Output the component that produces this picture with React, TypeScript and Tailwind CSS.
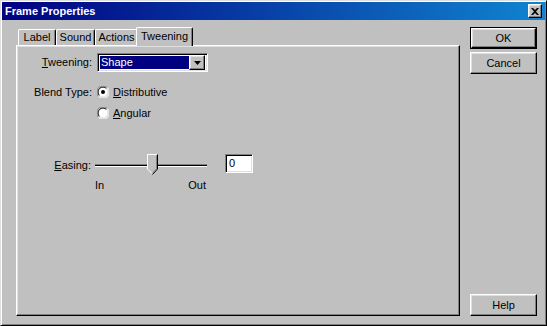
import React from "react";

const raised =
  "border border-t-white border-l-white border-r-black border-b-black shadow-[inset_-1px_-1px_#808080,inset_1px_1px_#dfdfdf]";
const sunken =
  "border border-t-[#808080] border-l-[#808080] border-r-white border-b-white shadow-[inset_1px_1px_#000,inset_-1px_-1px_#dfdfdf]";

function Radio({ checked }: { checked?: boolean }) {
  return (
    <svg width="12" height="12" viewBox="0 0 12 12" className="shrink-0">
      <circle cx="6" cy="6" r="5.5" fill="#fff" />
      <path d="M1.5 10.5 A6 6 0 0 1 10.5 1.5" stroke="#808080" strokeWidth="1" fill="none" />
      <path d="M10.5 1.5 A6 6 0 0 1 1.5 10.5" stroke="#ffffff" strokeWidth="1" fill="none" />
      <path d="M2.5 9.5 A4.8 4.8 0 0 1 9.5 2.5" stroke="#000" strokeWidth="1" fill="none" />
      <path d="M9.5 2.5 A4.8 4.8 0 0 1 2.5 9.5" stroke="#dfdfdf" strokeWidth="1" fill="none" />
      {checked && <circle cx="6" cy="6" r="2" fill="#000" />}
    </svg>
  );
}

function Tab({ label, w, selected }: { label: string; w: string; selected?: boolean }) {
  return (
    <div
      className={
        "relative flex items-center justify-center bg-[#c0c0c0] rounded-t-[2px] border-t border-l border-r border-t-white border-l-white border-r-black shadow-[inset_-1px_0_#808080] " +
        w +
        (selected ? " z-10 -mx-[2px] h-[19px] -mb-[1px] pb-[2px]" : " h-[16px]")
      }
    >
      <span className="leading-none">{label}</span>
    </div>
  );
}

function Button({ label, def }: { label: string; def?: boolean }) {
  return (
    <div className={"w-[67px] h-[22px] " + (def ? "border border-black" : "")}>
      <div className={"w-full h-full flex items-center justify-center bg-[#c0c0c0] " + raised}>
        <span className="leading-none">{label}</span>
      </div>
    </div>
  );
}

export default function App() {
  return (
    <div className="w-[547px] h-[326px] bg-[#c0c0c0] font-['Liberation_Sans',Arial,sans-serif] text-[11px] text-black border border-t-[#dfdfdf] border-l-[#dfdfdf] border-r-black border-b-black shadow-[inset_1px_1px_#fff,inset_-1px_-1px_#808080] p-[1px] flex flex-col">
      {/* Title bar */}
      <div className="h-[18px] flex items-center justify-between bg-[linear-gradient(to_right,#000080,#1084d0)] pl-[3px] pr-[3px] shrink-0">
        <span className="text-white font-bold text-[11px] leading-none">Frame Properties</span>
        <div className={"w-[14px] h-[14px] flex items-center justify-center bg-[#c0c0c0] " + raised}>
          <svg width="8" height="7" viewBox="0 0 8 7">
            <path d="M0 0h2l2 2 2-2h2L5 3.5 8 7H6L4 5 2 7H0l3-3.5z" fill="#000" />
          </svg>
        </div>
      </div>

      {/* Body */}
      <div className="flex flex-1 pt-[7px] pl-[14px] pr-[8px] pb-[8px]">
        {/* Tab control */}
        <div className="w-[444px] flex flex-col">
          <div className="h-[18px] flex items-end pl-[2px] shrink-0">
            <Tab label="Label" w="w-[38px]" />
            <Tab label="Sound" w="w-[39px]" />
            <Tab label="Actions" w="w-[43px]" />
            <Tab label="Tweening" w="w-[57px]" selected />
          </div>
          <div className="flex-1 border border-t-white border-l-white border-r-black border-b-black shadow-[inset_-1px_-1px_#808080,inset_1px_1px_#dfdfdf] p-[1px]">
            <div className="flex flex-col pt-[6px]">
              {/* Tweening row */}
              <div className="flex items-center h-[19px]">
                <div className="w-[74px] text-right pr-[0px]">
                  <span className="underline">T</span>weening:
                </div>
                <div className="ml-[5px] w-[111px] h-[19px] bg-white flex items-center border border-t-[#808080] border-l-[#808080] border-r-white border-b-white shadow-[inset_1px_1px_#000,inset_-1px_-1px_#dfdfdf] p-[2px]">
                  <div className="flex-1 h-full bg-[#000080] text-white flex items-center pl-[1px] leading-none">Shape</div>
                  <div className={"w-[16px] h-[15px] bg-[#c0c0c0] flex items-center justify-center " + raised}>
                    <svg width="7" height="4" viewBox="0 0 7 4">
                      <path d="M0 0h7L3.5 4z" fill="#000" />
                    </svg>
                  </div>
                </div>
              </div>

              {/* Blend type */}
              <div className="flex items-center h-[14px] mt-[13px]">
                <div className="w-[74px] text-right">Blend Type:</div>
                <div className="ml-[5px] flex items-center gap-[4px]">
                  <Radio checked />
                  <span>
                    <span className="underline">D</span>istributive
                  </span>
                </div>
              </div>
              <div className="flex items-center h-[14px] mt-[7px]">
                <div className="w-[74px]" />
                <div className="ml-[5px] flex items-center gap-[4px]">
                  <Radio />
                  <span>
                    <span className="underline">A</span>ngular
                  </span>
                </div>
              </div>

              {/* Easing */}
              <div className="flex items-center h-[22px] mt-[34px]">
                <div className="w-[73px] text-right">
                  <span className="underline">E</span>asing:
                </div>
                <div className="ml-[4px] w-[112px] h-[22px] flex items-center relative">
                  <div className="w-full h-[3px] border-y border-t-[#808080] border-b-white bg-black" />
                  <svg width="11" height="21" viewBox="0 0 11 21" className="absolute left-[52px] top-[0px]">
                    <path d="M0.5 0.5H10.5V15L5.5 20.5L0.5 15Z" fill="#c0c0c0" />
                    <path d="M0.5 15V0.5H10" stroke="#fff" fill="none" />
                    <path d="M10.5 0.5V15L5.5 20.5" stroke="#000" fill="none" />
                    <path d="M9.5 1.5V14.6L5.5 19" stroke="#808080" fill="none" />
                    <path d="M0.5 15L5 19.5" stroke="#fff" fill="none" />
                  </svg>
                </div>
                <div className={"ml-[18px] -mt-[4px] w-[28px] h-[19px] bg-white flex items-center pl-[3px] " + sunken}>
                  <span className="leading-none">0</span>
                </div>
              </div>
              <div className="flex items-center h-[12px] mt-[3px]">
                <div className="w-[77px]" />
                <div className="w-[112px] flex justify-between pr-[1px]">
                  <span>In</span>
                  <span>Out</span>
                </div>
              </div>
            </div>
          </div>
        </div>

        {/* Buttons */}
        <div className="ml-[10px] w-[67px] flex flex-col gap-[3px]">
          <Button label="OK" def />
          <Button label="Cancel" />
          <div className="flex-1" />
          <Button label="Help" />
        </div>
      </div>
    </div>
  );
}
